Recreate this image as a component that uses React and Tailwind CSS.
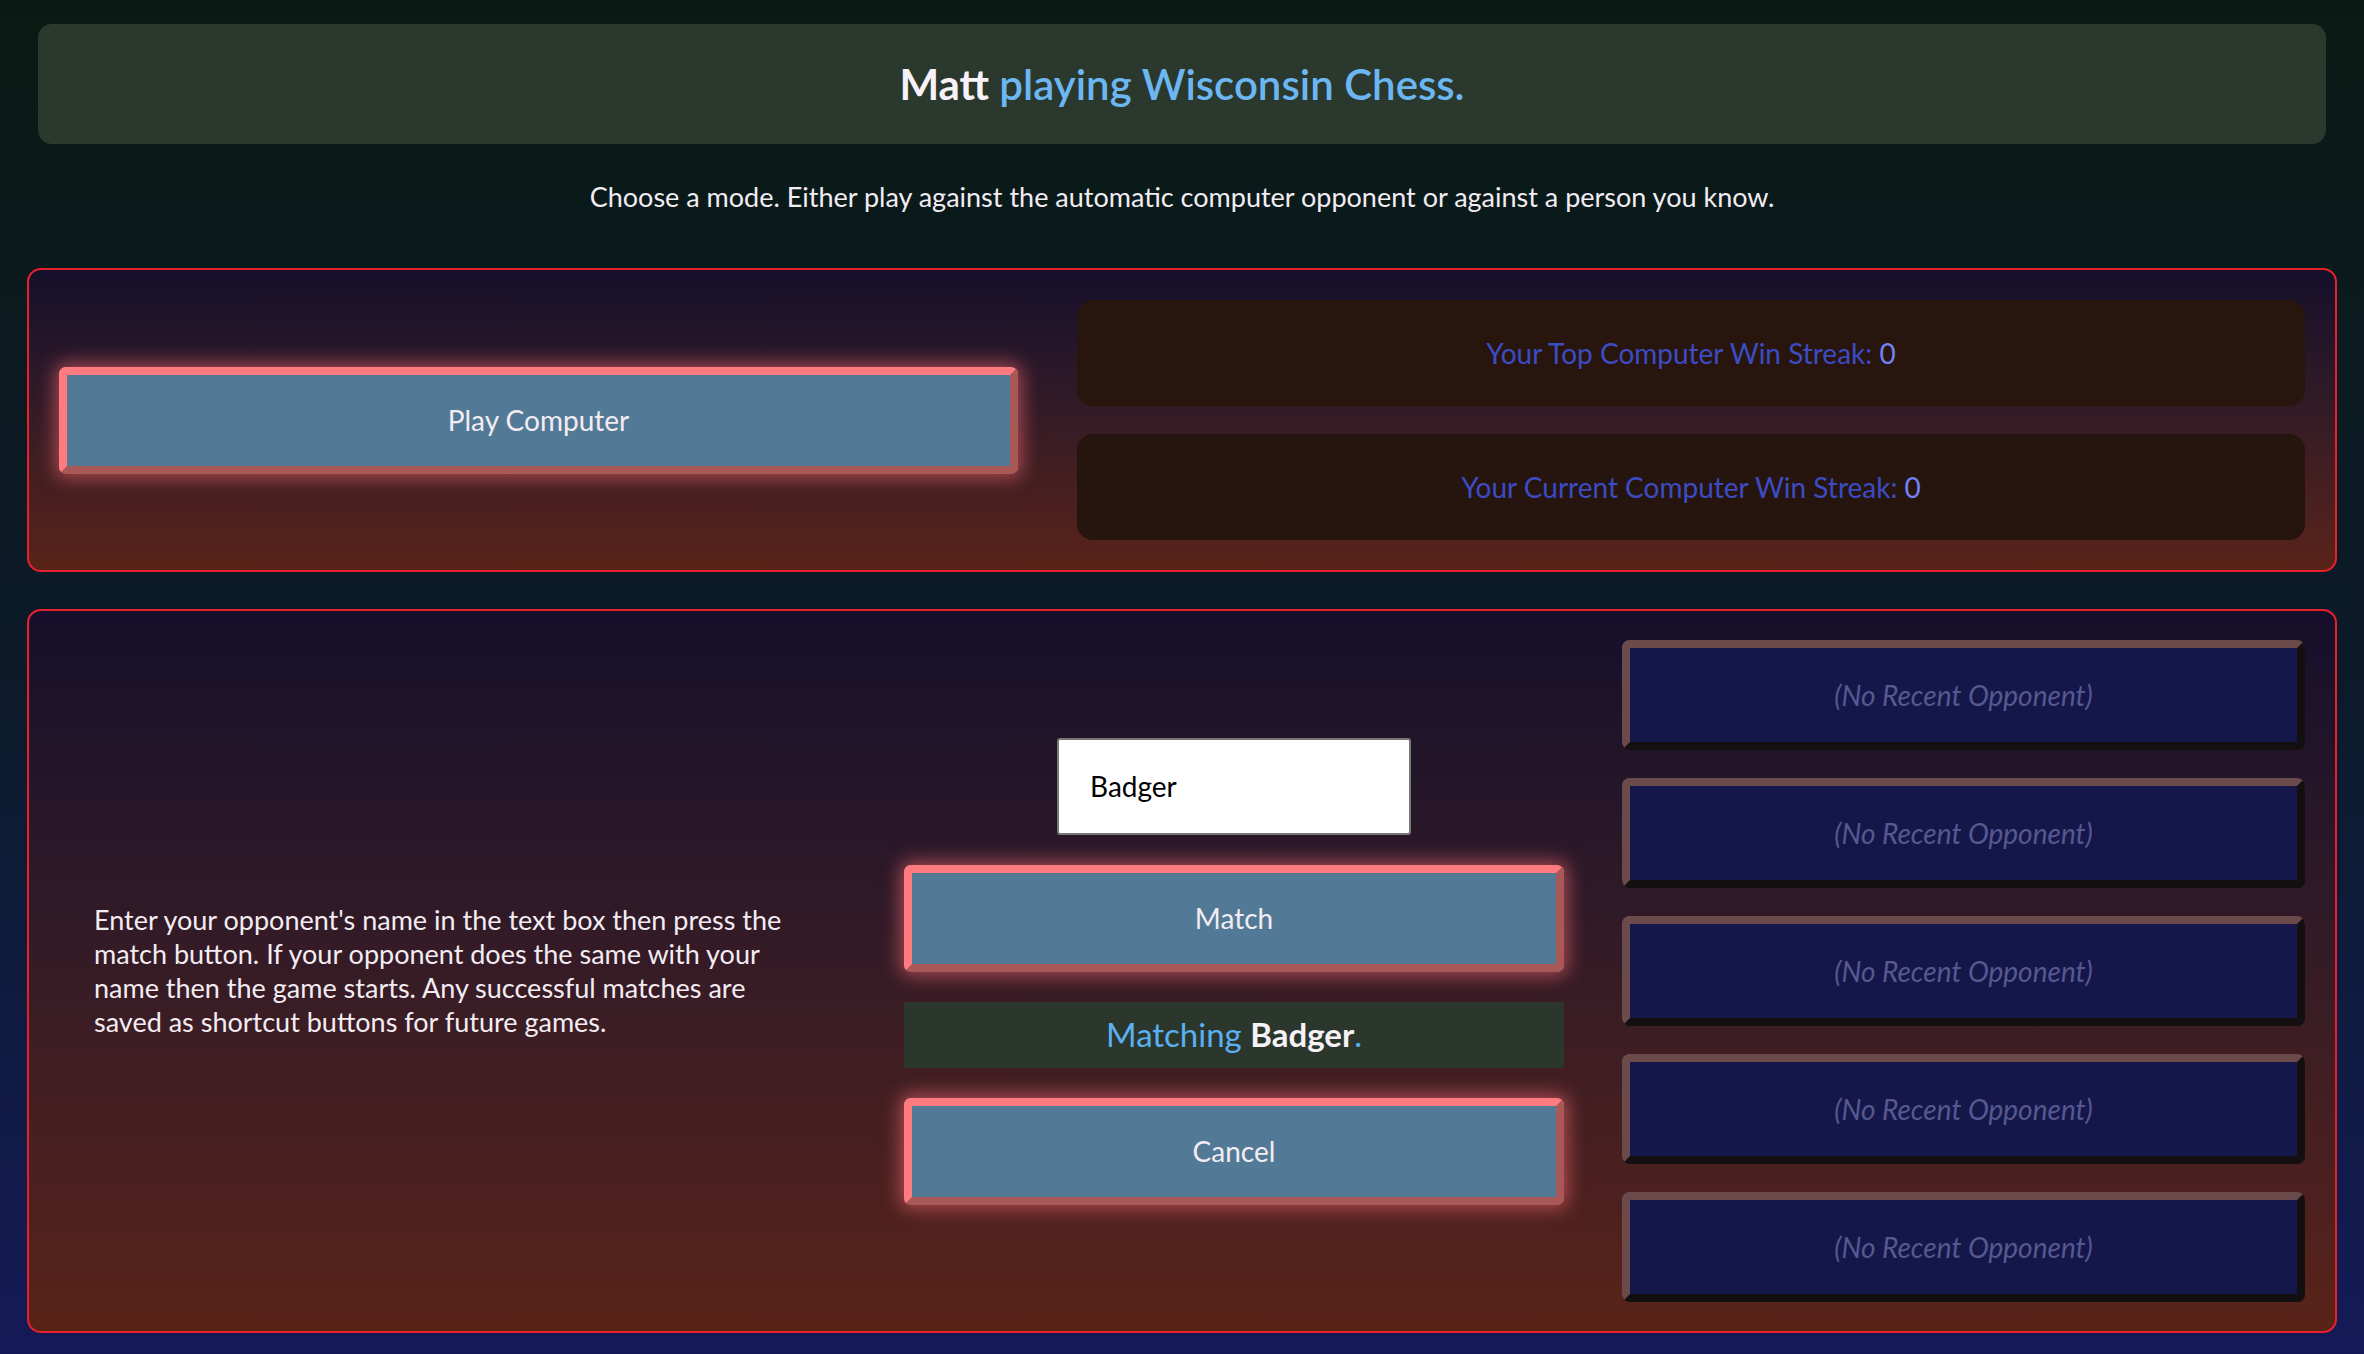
import React, { useState } from 'react';

const glowButton =
    "w-full h-[107px] bg-[#527a96] border-[8px] border-t-[#ff7b80] border-l-[#ff7b80] border-b-[#a95858] border-r-[#a95858] rounded-[7px] shadow-[0_0_18px_4px_rgba(255,110,118,0.55)] text-[28px] text-[#f3ecf3] flex items-center justify-center";

const App = () => {
    const [opponent, setOpponent] = useState('Badger');
    const recent = [1, 2, 3, 4, 5];

    return (
        <div className="min-h-screen w-full bg-gradient-to-b from-[#0a1a13] via-[#0c1a2a] to-[#151a57] pt-[24px] pb-[22px] px-[27px] font-['Lato',sans-serif]">
            <div className="mx-[11px] h-[120px] rounded-[14px] bg-[#2b382e] flex items-center justify-center">
                <h1 className="text-[42px] font-bold text-[#f7f2f7]">
                    Matt <span className="text-[#6cb6f2] font-semibold">playing Wisconsin Chess.</span>
                </h1>
            </div>

            <p className="mt-[37px] mb-[55px] h-[32px] leading-[32px] text-center text-[27px] text-[#f3ecf3]">
                Choose a mode. Either play against the automatic computer opponent or against a person you know.
            </p>

            <div className="rounded-[14px] border-2 border-[#e8202c] bg-gradient-to-b from-[#150f2b] to-[#5a2318] p-[30px] flex items-center gap-[59px]">
                <div className="w-[959px] shrink-0">
                    <button className={glowButton}>Play Computer</button>
                </div>
                <div className="flex-1 flex flex-col gap-[28px]">
                    <div className="h-[106px] rounded-[16px] bg-[#28150e] flex items-center justify-center text-[28px] text-[#3b4cc4]">
                        Your Top Computer Win Streak:&nbsp;<span className="text-[#7282f2]">0</span>
                    </div>
                    <div className="h-[106px] rounded-[16px] bg-[#26140e] flex items-center justify-center text-[28px] text-[#3b4cc4]">
                        Your Current Computer Win Streak:&nbsp;<span className="text-[#7282f2]">0</span>
                    </div>
                </div>
            </div>

            <div className="mt-[37px] rounded-[14px] border-2 border-[#e8202c] bg-gradient-to-b from-[#150f2b] to-[#5a2318] px-[30px] py-[29px] flex items-center gap-[58px]">
                <div className="flex-1 pl-[35px]">
                    <p className="w-[715px] text-[27px] leading-[34px] text-[#f3ecf3]">
                        Enter your opponent's name in the text box then press the match button. If your opponent does the same with your name then the game starts. Any successful matches are saved as shortcut buttons for future games.
                    </p>
                </div>

                <div className="w-[660px] shrink-0 flex flex-col items-center gap-[30px]">
                    <input
                        type="text"
                        value={opponent}
                        onChange={(e) => setOpponent(e.target.value)}
                        className="w-[354px] h-[97px] bg-white border-2 border-[#777777] rounded-[3px] px-[31px] text-[28px] text-black outline-none font-['Lato',sans-serif]"
                    />
                    <button className={glowButton}>Match</button>
                    <div className="w-full h-[66px] bg-[#2b372d] flex items-center justify-center text-[33px] text-[#5ab0f0]">
                        Matching&nbsp;<span className="font-bold text-[#f7f2f7]">{opponent}</span>.
                    </div>
                    <button className={glowButton}>Cancel</button>
                </div>

                <div className="w-[683px] shrink-0 flex flex-col gap-[28px]">
                    {recent.map(i => (
                        <button
                            key={i}
                            className="h-[110px] w-full bg-[#15174a] border-[8px] border-t-[#6b4a4c] border-l-[#6b4a4c] border-b-[#140f10] border-r-[#140f10] rounded-[8px] flex items-center justify-center text-[28px] italic text-[#575890]"
                        >
                            (No Recent Opponent)
                        </button>
                    ))}
                </div>
            </div>
        </div>
    );
};

export default App;
